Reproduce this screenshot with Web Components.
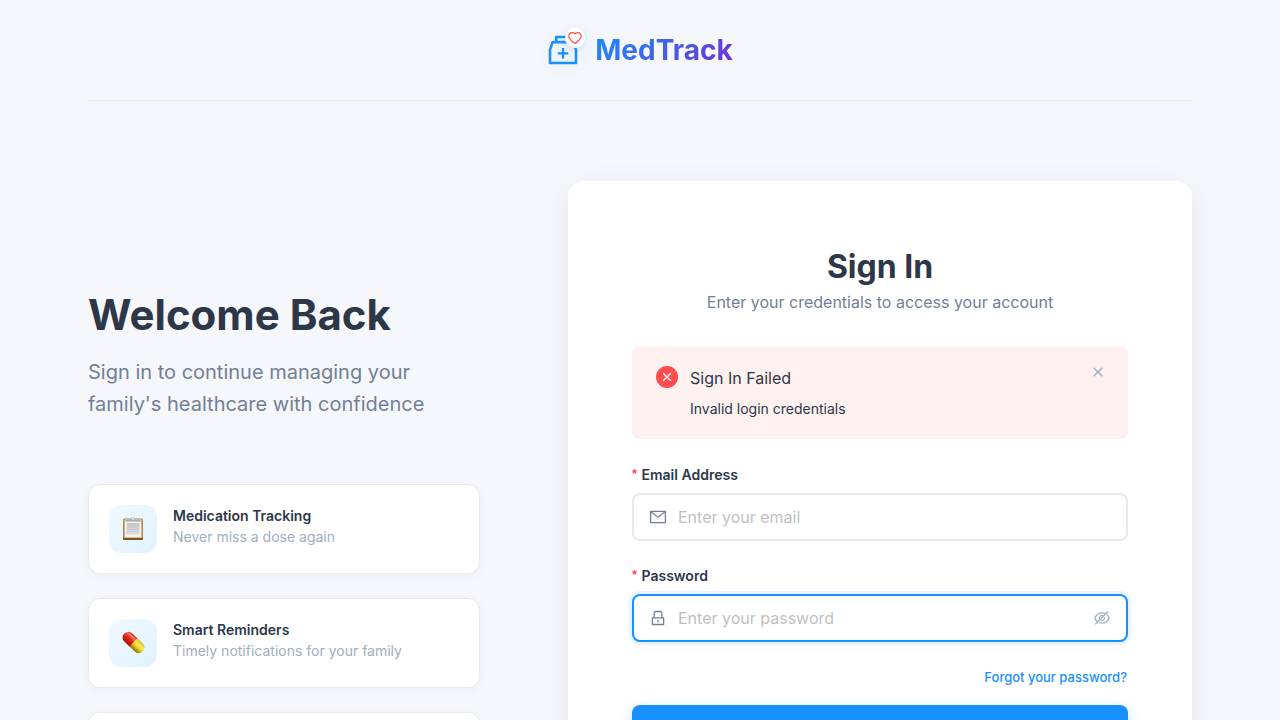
<!DOCTYPE html>
<html lang="en"><head><meta charset="utf-8"><title>MedTrack – Sign In</title>
<style>
html,body{margin:0;height:720px;overflow:hidden;background:#f5f7fb}
body{font-family:Inter,"Liberation Sans",sans-serif;color:#2d3748;font-size:14px}
</style></head><body>
<sign-in-page></sign-in-page>
<script>
const define=(name,css,html)=>customElements.define(name,class extends HTMLElement{
  constructor(){super();
    this.attachShadow({mode:'open'}).innerHTML=`<style>*{box-sizing:border-box}:host{display:block;box-sizing:border-box}${css}</style>${typeof html==='function'?html(this):html}`;}
});
const icons={
 box:'M839.2 278.1a32 32 0 00-30.4-22.1H736V144c0-17.7-14.3-32-32-32H320c-17.7 0-32 14.3-32 32v112h-72.8a31.9 31.9 0 00-30.4 22.1L112 502v378c0 17.7 14.3 32 32 32h736c17.7 0 32-14.3 32-32V502l-72.8-223.9zM360 184h304v72H360v-72zm480 656H184V513.4L244.3 328h535.4L840 513.4V840zM652 572H544V464c0-4.4-3.6-8-8-8h-48c-4.4 0-8 3.6-8 8v108H372c-4.4 0-8 3.6-8 8v48c0 4.4 3.6 8 8 8h108v108c0 4.4 3.6 8 8 8h48c4.4 0 8-3.6 8-8V636h108c4.4 0 8-3.6 8-8v-48c0-4.4-3.6-8-8-8z',
 heart:'M923 283.6a260.04 260.04 0 00-56.9-82.8 264.4 264.4 0 00-84-55.5A265.34 265.34 0 00679.7 125c-49.3 0-97.4 13.5-139.2 39-10 6.1-19.5 12.8-28.5 20.1-9-7.3-18.5-14-28.5-20.1-41.8-25.5-89.9-39-139.2-39-35.5 0-69.9 6.8-102.4 20.3-31.4 13-59.7 31.7-84 55.5a258.44 258.44 0 00-56.9 82.8c-13.9 32.3-21 66.6-21 101.9 0 33.3 6.8 68 20.3 103.3 11.3 29.5 27.5 60.1 48.2 91 32.8 48.9 77.9 99.9 133.9 151.6 92.8 85.7 184.7 144.9 188.6 147.3l23.7 15.2c10.5 6.7 24 6.7 34.5 0l23.7-15.2c3.9-2.5 95.7-61.6 188.6-147.3 56-51.7 101.1-102.7 133.9-151.6 20.7-30.9 37-61.5 48.2-91 13.5-35.3 20.3-70 20.3-103.3.1-35.3-7-69.6-20.9-101.9zM512 814.8S156 586.7 156 385.5C156 283.6 240.3 201 344.3 201c73.1 0 136.5 40.8 167.7 100.4C543.2 241.8 606.6 201 679.7 201c104 0 188.3 82.6 188.3 184.5 0 201.2-356 429.3-356 429.3z',
 mail:'M928 160H96c-17.7 0-32 14.3-32 32v640c0 17.7 14.3 32 32 32h832c17.7 0 32-14.3 32-32V192c0-17.7-14.3-32-32-32zm-40 110.8V792H136V270.8l-27.6-21.5 39.3-50.5 42.8 33.3h643.1l42.8-33.3 39.3 50.5-27.7 21.5zM833.6 232L512 482 190.4 232l-42.8-33.3-39.3 50.5 27.6 21.5 341.6 265.6a55.99 55.99 0 0068.7 0L888 270.8l27.6-21.5-39.3-50.5-42.7 33.2z',
 lock:'M832 464h-68V240c0-70.7-57.3-128-128-128H388c-70.7 0-128 57.3-128 128v224h-68c-17.7 0-32 14.3-32 32v384c0 17.7 14.3 32 32 32h640c17.7 0 32-14.3 32-32V496c0-17.7-14.3-32-32-32zM332 240c0-30.9 25.1-56 56-56h248c30.9 0 56 25.1 56 56v224H332V240zm460 600H232V536h560v304zM484 701v53c0 4.4 3.6 8 8 8h40c4.4 0 8-3.6 8-8v-53a48.01 48.01 0 10-56 0z',
 eye:'M942.2 486.2Q889.47 375.11 816.7 305l-50.88 50.88C807.31 395.53 843.45 447.4 874.7 512 791.5 684.2 673.4 766 512 766q-72.67 0-133.87-22.38L323 798.75Q408 838 512 838q288.3 0 430.2-300.3a60.29 60.29 0 000-51.5zm-63.57-320.64L836 122.88a8 8 0 00-11.32 0L715.31 232.2Q624.86 186 512 186q-288.3 0-430.2 300.3a60.3 60.3 0 000 51.5q56.69 119.4 136.5 191.41L112.48 835a8 8 0 000 11.31L155.17 889a8 8 0 0011.31 0l712.15-712.12a8 8 0 000-11.32zM149.3 512C232.6 339.8 350.7 258 512 258c54.54 0 104.13 9.36 149.12 28.39l-70.3 70.3a176 176 0 00-238.13 238.13l-83.42 83.42C223.1 637.49 183.3 582.28 149.3 512zm246.7 0a112.11 112.11 0 01146.2-106.69L401.31 546.2A112 112 0 01396 512zM508 624c-3.46 0-6.87-.16-10.25-.47l-52.82 52.82a176.09 176.09 0 00227.42-227.42l-52.82 52.82c.31 3.38.47 6.79.47 10.25a111.94 111.94 0 01-112 112z'
};
const art={
 clipboard:`<svg width="24" height="26" viewBox="0 0 24 26"><defs><linearGradient id="p" x2="0" y2="1"><stop stop-color="#c6c7c9"/><stop offset="1" stop-color="#dcdddd"/></linearGradient></defs><rect x="2" y="3.4" width="20" height="21.6" rx="1.2" fill="#b98642"/><path d="M2 23h20v1a1 1 0 01-1 1H3a1 1 0 01-1-1z" fill="#80551d"/><path d="M3.6 4.5h16.8v18H3.6z" fill="#f3f3f4"/><path d="M5.5 8h13v11.5h-13z" fill="url(#p)"/><path d="M7 10.5h10M7 12.5h10M7 14.5h10M7 16.5h10" stroke="#c4c5c7" stroke-width=".6"/><path d="M4.5 4h5.4a2.1 2.1 0 014.2 0h5.4v2h-15z" fill="#b4bbc3"/><circle cx="12" cy="3.5" r="1" fill="#e8f5ff"/><path d="M4.5 5.7h15v.7h-15z" fill="#858b91"/></svg>`,
 pill:`<svg width="25" height="25" viewBox="0 0 26 26"><defs><linearGradient id="r" x2="0" y2="1"><stop stop-color="#b91c0c"/><stop offset=".22" stop-color="#ff6955"/><stop offset=".5" stop-color="#e02813"/><stop offset="1" stop-color="#a81208"/></linearGradient><linearGradient id="y" x2="0" y2="1"><stop stop-color="#d3b91e"/><stop offset=".3" stop-color="#fbe95c"/><stop offset=".55" stop-color="#edd52c"/><stop offset="1" stop-color="#8b6c05"/></linearGradient></defs><g transform="rotate(43 13 13)"><path d="M13.5 7.2H5.3a5.8 5.8 0 000 11.6h8.2z" fill="url(#r)"/><path d="M12.8 7.2h7.9a5.8 5.8 0 010 11.6h-7.9z" fill="url(#y)"/><path d="M4 9.2h7" stroke="#ff9d8e" stroke-width="1" stroke-linecap="round"/></g></svg>`
};

define('line-icon',`:host{display:inline-flex;width:16px;height:16px;flex:none}svg{width:100%;height:100%;display:block}`,
 e=>`<svg viewBox="64 64 896 896" fill="currentColor"><path d="${icons[e.getAttribute('name')]}"/></svg>`);

define('brand-header',`:host{height:101px;border-bottom:1px solid #e8eaed;display:flex;justify-content:center;align-items:center;gap:16px}
.mark{position:relative;width:32px;height:32px;color:#1890ff;filter:drop-shadow(0 4px 8px rgba(24,144,255,.12));}
.mark>line-icon{width:32px;height:32px}
.badge{position:absolute;right:-6px;top:-6px;width:20px;height:20px;border-radius:50%;background:#fff;display:flex;align-items:center;justify-content:center;color:#ff4d4f;box-shadow:0 2px 4px rgba(0,0,0,.06)}
.badge line-icon{width:14px;height:14px}
.name{font-size:28px;font-weight:700;line-height:44px;background:linear-gradient(135deg,#1890ff,#722ed1);-webkit-background-clip:text;background-clip:text;color:transparent}`,
`<div class="mark"><line-icon name="box"></line-icon><span class="badge"><line-icon name="heart"></line-icon></span></div><div class="name">MedTrack</div>`);

define('feature-card',`:host{height:90px;background:#fff;border:1px solid #e8eaed;border-radius:12px;padding:20px;display:flex;gap:16px;box-shadow:0 2px 8px rgba(0,0,0,.04)}
.art{width:48px;height:48px;border-radius:12px;background:linear-gradient(135deg,#f0f9ff,#e0f2fe);display:flex;align-items:center;justify-content:center;padding-bottom:2px}
.title{font-weight:600;line-height:21px;color:#2d3748}.text{line-height:21px;color:#a0aec0}`,
e=>`<div class="art">${art[e.getAttribute('art')]||''}</div><div><div class="title"><slot name="title"></slot></div><div class="text"><slot></slot></div></div>`);

define('welcome-panel',`:host{width:392px;padding-top:187px}
h1{font-size:42px;line-height:53px;font-weight:700;margin:0 0 15px}
p{font-size:20px;line-height:32px;color:#718096;margin:0 0 64px}
.list{display:grid;gap:24px}`,
`<h1>Welcome Back</h1><p>Sign in to continue managing your family's healthcare with confidence</p>
<div class="list"><feature-card art="clipboard"><span slot="title">Medication Tracking</span>Never miss a dose again</feature-card>
<feature-card art="pill"><span slot="title">Smart Reminders</span>Timely notifications for your family</feature-card>
<feature-card></feature-card></div>`);

define('error-alert',`:host{height:93px;background:#fff1f0;border-radius:8px;padding:20px 24px;display:flex;gap:12px}
.ok{width:22px;height:22px;flex:none}.body{flex:1}.t{font-size:16px;line-height:24px}.d{font-size:14px;line-height:22px;margin-top:8px}.x{width:12px;height:12px;flex:none}`,
`<svg class="ok" viewBox="0 0 22 22"><circle cx="11" cy="11" r="11" fill="#ff4d4f"/><path d="M7.2 7.2l7.6 7.6M14.8 7.2l-7.6 7.6" stroke="#fff1f0" stroke-width="1.5"/></svg>
<div class="body"><div class="t"><slot name="title"></slot></div><div class="d"><slot></slot></div></div>
<svg class="x" viewBox="0 0 12 12"><path d="M1.7 1.7l8.6 8.6M10.3 1.7l-8.6 8.6" stroke="#a0aec0" stroke-width="1.5"/></svg>`);

define('form-field',`label{display:flex;height:22px;align-items:center;font-weight:600;line-height:22px;margin-bottom:7px}
label i{font:700 13px/14px "Liberation Sans",sans-serif;color:#ff4d4f;margin:-2px 4px 0 0;width:5.5px}
.input{height:48px;border:2px solid #e8eaed;border-radius:8px;background:#fff;padding:0 16px;display:flex;align-items:center;color:#718096}
.value{font-size:16px;color:#bfbfbf;margin-left:12px;flex:1;line-height:24px}
:host([active]) .input{border-color:#1890ff;box-shadow:0 0 0 3px rgba(24,144,255,.1)}
.eye{color:#a0aec0}`,
e=>`<label><i>*</i><slot></slot></label><div class="input"><line-icon name="${e.getAttribute('icon')}"></line-icon><span class="value">${e.getAttribute('hint')}</span>${e.hasAttribute('active')?'<line-icon class="eye" name="eye"></line-icon>':''}</div>`);

define('sign-in-form',`:host{width:624px;height:760px;background:#fff;border-radius:16px;padding:65px 64px 64px;box-shadow:0 8px 32px rgba(0,0,0,.07)}
h2{font-size:32px;line-height:42px;font-weight:700;margin:0;text-align:center}
.sub{font-size:16px;line-height:26px;color:#718096;text-align:center;margin:1px 0 31px}
error-alert{margin-bottom:25px}form-field+form-field{margin-top:24px}
.forgot{text-align:right;color:#1890ff;font-size:13px;font-weight:500;line-height:22px;margin:24px 1px 17px}
.button{height:48px;border-radius:8px;background:#1890ff;box-shadow:0 4px 12px rgba(24,144,255,.25)}`,
`<h2>Sign In</h2><div class="sub">Enter your credentials to access your account</div>
<error-alert><span slot="title">Sign In Failed</span>Invalid login credentials</error-alert>
<form-field icon="mail" hint="Enter your email">Email Address</form-field>
<form-field icon="lock" hint="Enter your password" active>Password</form-field>
<div class="forgot">Forgot your password?</div><div class="button"></div>`);

define('sign-in-page',`:host{height:720px;padding:0 88px;overflow:hidden}
main{display:flex;justify-content:space-between;align-items:flex-start}sign-in-form{margin-top:80px}`,
`<brand-header></brand-header><main><welcome-panel></welcome-panel><sign-in-form></sign-in-form></main>`);
</script></body></html>
